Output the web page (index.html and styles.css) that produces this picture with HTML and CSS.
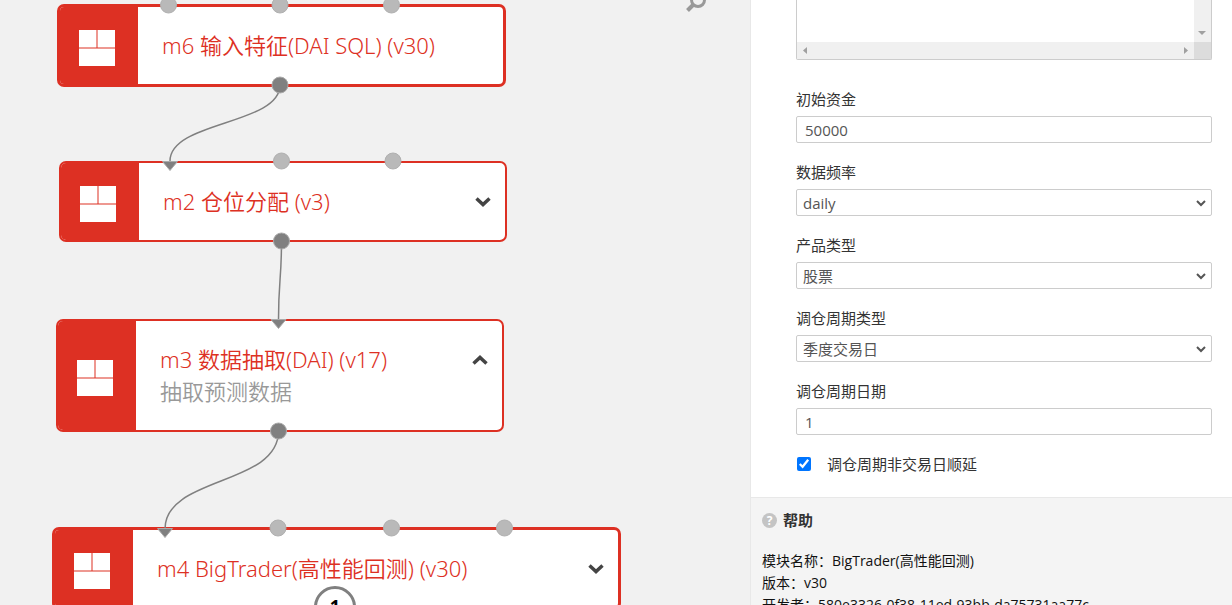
FILE: index.html
```html
<!DOCTYPE html>
<html lang="zh-CN">
<head>
    <meta charset="UTF-8">
    <meta name="viewport" content="width=device-width, initial-scale=1.0">
    <title>BigTrader</title>
    <link rel="stylesheet" href="styles.css">
</head>
<body>
    <div class="workspace">
        <main class="canvas">
            <div class="node node-m6 selected">
                <div class="node-icon">
                    <svg width="36" height="36" viewBox="0 0 36 36"><path d="M0 0h17.5v17.5H0zM18.5 0H36v17.5H18.5zM0 18.5h36V36H0z"/></svg>
                </div>
                <div class="node-body">
                    <div class="node-title">m6 输入特征(DAI SQL) (v30)</div>
                </div>
            </div>
            <div class="node node-m2">
                <div class="node-icon">
                    <svg width="36" height="36" viewBox="0 0 36 36"><path d="M0 0h17.5v17.5H0zM18.5 0H36v17.5H18.5zM0 18.5h36V36H0z"/></svg>
                </div>
                <div class="node-body">
                    <div class="node-title">m2 仓位分配 (v3)</div>
                </div>
                <button class="node-toggle" aria-label="展开">
                    <svg width="16" height="12" viewBox="0 0 16 12"><path d="M1.5 2.5L8 8.5l6.500-6"/></svg>
                </button>
            </div>
            <div class="node node-m3">
                <div class="node-icon">
                    <svg width="36" height="36" viewBox="0 0 36 36"><path d="M0 0h17.5v17.5H0zM18.5 0H36v17.5H18.5zM0 18.5h36V36H0z"/></svg>
                </div>
                <div class="node-body">
                    <div class="node-title">m3 数据抽取(DAI) (v17)</div>
                    <div class="node-comment">抽取预测数据</div>
                </div>
                <button class="node-toggle" aria-label="收起">
                    <svg width="16" height="12" viewBox="0 0 16 12"><path d="M1.500 9.500L8 3.500l6.500 6"/></svg>
                </button>
            </div>
            <div class="node node-m4 selected">
                <div class="node-icon">
                    <svg width="36" height="36" viewBox="0 0 36 36"><path d="M0 0h17.5v17.5H0zM18.5 0H36v17.5H18.5zM0 18.5h36V36H0z"/></svg>
                </div>
                <div class="node-body">
                    <div class="node-title">m4 BigTrader(高性能回测) (v30)</div>
                </div>
                <button class="node-toggle" aria-label="展开">
                    <svg width="16" height="12" viewBox="0 0 16 12"><path d="M1.500 2.500L8 8.500l6.500-6"/></svg>
                </button>
            </div>

            <!-- wires and ports -->
            <svg class="wires" width="750" height="605" viewBox="0 0 750 605">
                <g class="wire">
                    <path d="M280 85C280 125 170 121 170 161"/>
                    <path d="M281.500 241C281.500 280 278.500 280 278.500 320"/>
                    <path d="M278.500 431C278.500 486 165 476 165 529"/>
                </g>
                <g class="port">
                    <circle cx="168.500" cy="5" r="8"/>
                    <circle cx="280" cy="5" r="8"/>
                    <circle cx="391.500" cy="5" r="8"/>
                    <circle cx="281.500" cy="161" r="8"/>
                    <circle cx="393" cy="161" r="8"/>
                    <circle cx="278" cy="528" r="8"/>
                    <circle cx="391.500" cy="528" r="8"/>
                    <circle cx="504.500" cy="528" r="8"/>
                </g>
                <g class="port-out">
                    <circle cx="280" cy="85" r="8"/>
                    <circle cx="281.500" cy="241" r="8"/>
                    <circle cx="278.500" cy="431" r="8"/>
                </g>
                <g class="port-out">
                    <path d="M162.500 161.500h15l-7.500 9z"/>
                    <path d="M271 319.500h15l-7.500 9z"/>
                    <path d="M157.500 528.500h15l-7.500 9z"/>
                </g>
            </svg>

            <div class="port-badge">1</div>
            <button class="search" aria-label="搜索">
                <svg width="22" height="24" viewBox="0 0 22 24"><circle cx="13" cy="11" r="6.500"/><path class="handle" d="M8 16l-5.500 5.500"/></svg>
            </button>
        </main>

        <aside class="panel">
            <form class="params">
                <div class="code-box">
                    <textarea class="code" aria-label="代码"></textarea>
                    <div class="bar-v">
                        <svg width="16" height="16" viewBox="0 0 16 16"><path d="M4 5h8l-4 4z"/></svg>
                    </div>
                    <div class="bar-h">
                        <svg width="16" height="16" viewBox="0 0 16 16"><path d="M10 5v7l-4-3.500z"/></svg>
                        <svg width="16" height="16" viewBox="0 0 16 16"><path d="M6 5v7l4-3.500z"/></svg>
                    </div>
                    <div class="bar-corner"></div>
                </div>
                <div class="field">
                    <label for="capital">初始资金</label>
                    <input type="text" id="capital" value="50000">
                </div>
                <div class="field">
                    <label for="frequency">数据频率</label>
                    <div class="select-box">
                        <select id="frequency"><option>daily</option></select>
                        <svg width="10" height="8" viewBox="0 0 10 8"><path d="M1 2l4 4 4-4"/></svg>
                    </div>
                </div>
                <div class="field">
                    <label for="product">产品类型</label>
                    <div class="select-box">
                        <select id="product"><option>股票</option></select>
                        <svg width="10" height="8" viewBox="0 0 10 8"><path d="M1 2l4 4 4-4"/></svg>
                    </div>
                </div>
                <div class="field">
                    <label for="period">调仓周期类型</label>
                    <div class="select-box">
                        <select id="period"><option>季度交易日</option></select>
                        <svg width="10" height="8" viewBox="0 0 10 8"><path d="M1 2l4 4 4-4"/></svg>
                    </div>
                </div>
                <div class="field">
                    <label for="period-day">调仓周期日期</label>
                    <input type="text" id="period-day" value="1">
                </div>
                <div class="check">
                    <input type="checkbox" id="delay" checked>
                    <label for="delay">调仓周期非交易日顺延</label>
                </div>
            </form>
            <section class="help">
                <h2><span class="help-icon">?</span>帮助</h2>
                <p>模块名称：BigTrader(高性能回测)</p>
                <p>版本：v30</p>
                <p>开发者：580e3326-0f38-11ed-93bb-da75731aa77c</p>
            </section>
        </aside>
    </div>
</body>
</html>
```
FILE: styles.css
```css
* {
    box-sizing: border-box;
}

body {
    margin: 0;
    font-family: "Open Sans", "Noto Sans CJK SC", sans-serif;
    color: #333;
}

button {
    padding: 0;
    border: none;
    background: none;
    cursor: pointer;
}

.workspace {
    display: flex;
    height: 100vh;
    overflow: hidden;
}

/* flow canvas */
.canvas {
    position: relative;
    flex: 1;
    overflow: hidden;
    background: #f1f1f1;
}

.node {
    position: absolute;
    display: flex;
    width: 448px;
    height: 81px;
    border: 2px solid #dd3023;
    border-radius: 7px;
    background: #fff;
    overflow: hidden;
}

.node.selected {
    height: 83px;
    border-width: 3px;
}

.node-m6 {
    left: 57px;
    top: 4px;
    width: 449px;
}

.node-m2 {
    left: 59px;
    top: 161px;
}

.node-m3 {
    left: 56px;
    top: 319px;
    height: 113px;
}

.node-m4 {
    left: 52px;
    top: 527px;
    width: 569px;
}

.node-icon {
    display: flex;
    align-items: center;
    justify-content: center;
    width: 78px;
    padding: 4px 4px 0 0;
    background: #dd3023;
}

.node-icon svg {
    fill: #fff;
}

.node-body {
    display: flex;
    flex: 1;
    flex-direction: column;
    justify-content: center;
    padding: 0 0 2px 24px;
    font-family: "Noto Sans", "Noto Sans CJK SC", sans-serif;
    font-size: 22px;
    font-weight: 350;
    line-height: 32px;
    white-space: nowrap;
}

.node-title {
    color: #dd3023;
}

.node-comment {
    color: #999;
}

.node-toggle {
    align-self: flex-start;
    height: 78px;
    margin-right: 14px;
}

.node-toggle svg {
    display: block;
    fill: none;
    stroke: #444;
    stroke-width: 3.500;
}

.wires {
    position: absolute;
    left: 0;
    top: 0;
}

.wire {
    fill: none;
    stroke: #808080;
    stroke-width: 1.500;
}

.port {
    fill: #b9b9b9;
    stroke: #b0b0b0;
}

.port-out {
    fill: #808080;
    stroke: #aaa;
}

.port-badge {
    position: absolute;
    left: 314px;
    top: 586px;
    width: 42px;
    height: 42px;
    border: 3px solid #808080;
    border-radius: 50%;
    background: #fff;
    color: #000;
    font-size: 18px;
    font-weight: bold;
    line-height: 34px;
    text-align: center;
}

.search {
    position: absolute;
    right: 43px;
    top: -11px;
}

.search svg {
    display: block;
    fill: none;
    stroke: #999;
    stroke-width: 3;
}

.search .handle {
    stroke-width: 4;
}

/* right side panel */
.panel {
    width: 482px;
    border-left: 1px solid #e8e8e8;
    background: #f4f4f4;
}

.params {
    display: flex;
    flex-direction: column;
    gap: 20px;
    padding: 0 20px 24px 45px;
    border-bottom: 1px solid #e8e8e8;
    background: #fff;
    font-size: 15px;
    line-height: 18px;
}

.code-box {
    display: grid;
    grid-template-columns: 1fr 17px;
    grid-template-rows: 42px 17px;
    margin-bottom: 10px;
    border: 1px solid #ccc;
    border-top: none;
    border-radius: 0 0 2px 2px;
}

.code {
    width: 100%;
    height: 42px;
    border: none;
    resize: none;
    overflow: hidden;
}

.bar-v,
.bar-h {
    display: flex;
    background: #f0f0f0;
    fill: #a0a0a0;
}

.bar-v {
    align-items: flex-end;
}

.bar-h {
    justify-content: space-between;
}

.bar-corner {
    background: #dcdcdc;
}

.field {
    display: flex;
    flex-direction: column;
    gap: 8px;
}

.field input,
.field select {
    display: block;
    width: 100%;
    height: 27px;
    padding: 0 8px;
    border: 1px solid #ccc;
    border-radius: 2px;
    background: #fff;
    color: #555;
    font-family: inherit;
    font-size: 15px;
}

.field select {
    padding: 0 6px;
    appearance: none;
}

.select-box {
    display: grid;
    align-items: center;
}

.select-box select,
.select-box svg {
    grid-area: 1 / 1;
}

.select-box svg {
    justify-self: end;
    margin-right: 6px;
    fill: none;
    stroke: #555;
    stroke-width: 2;
    pointer-events: none;
}

.check {
    display: flex;
    align-items: center;
    gap: 15px;
}

.check input {
    width: 14px;
    height: 14px;
    margin: 0 1px;
}

.help {
    padding: 11px;
    color: #111;
    font-size: 14px;
    line-height: 22px;
}

.help h2 {
    display: flex;
    align-items: center;
    gap: 6px;
    margin: 0 0 19px;
    color: #333;
    font-size: 15px;
    line-height: 22px;
}

.help p {
    margin: 0;
}

.help-icon {
    width: 15px;
    height: 15px;
    border-radius: 50%;
    background: #c4c4c4;
    color: #fff;
    font-size: 12px;
    line-height: 15px;
    text-align: center;
}
```
